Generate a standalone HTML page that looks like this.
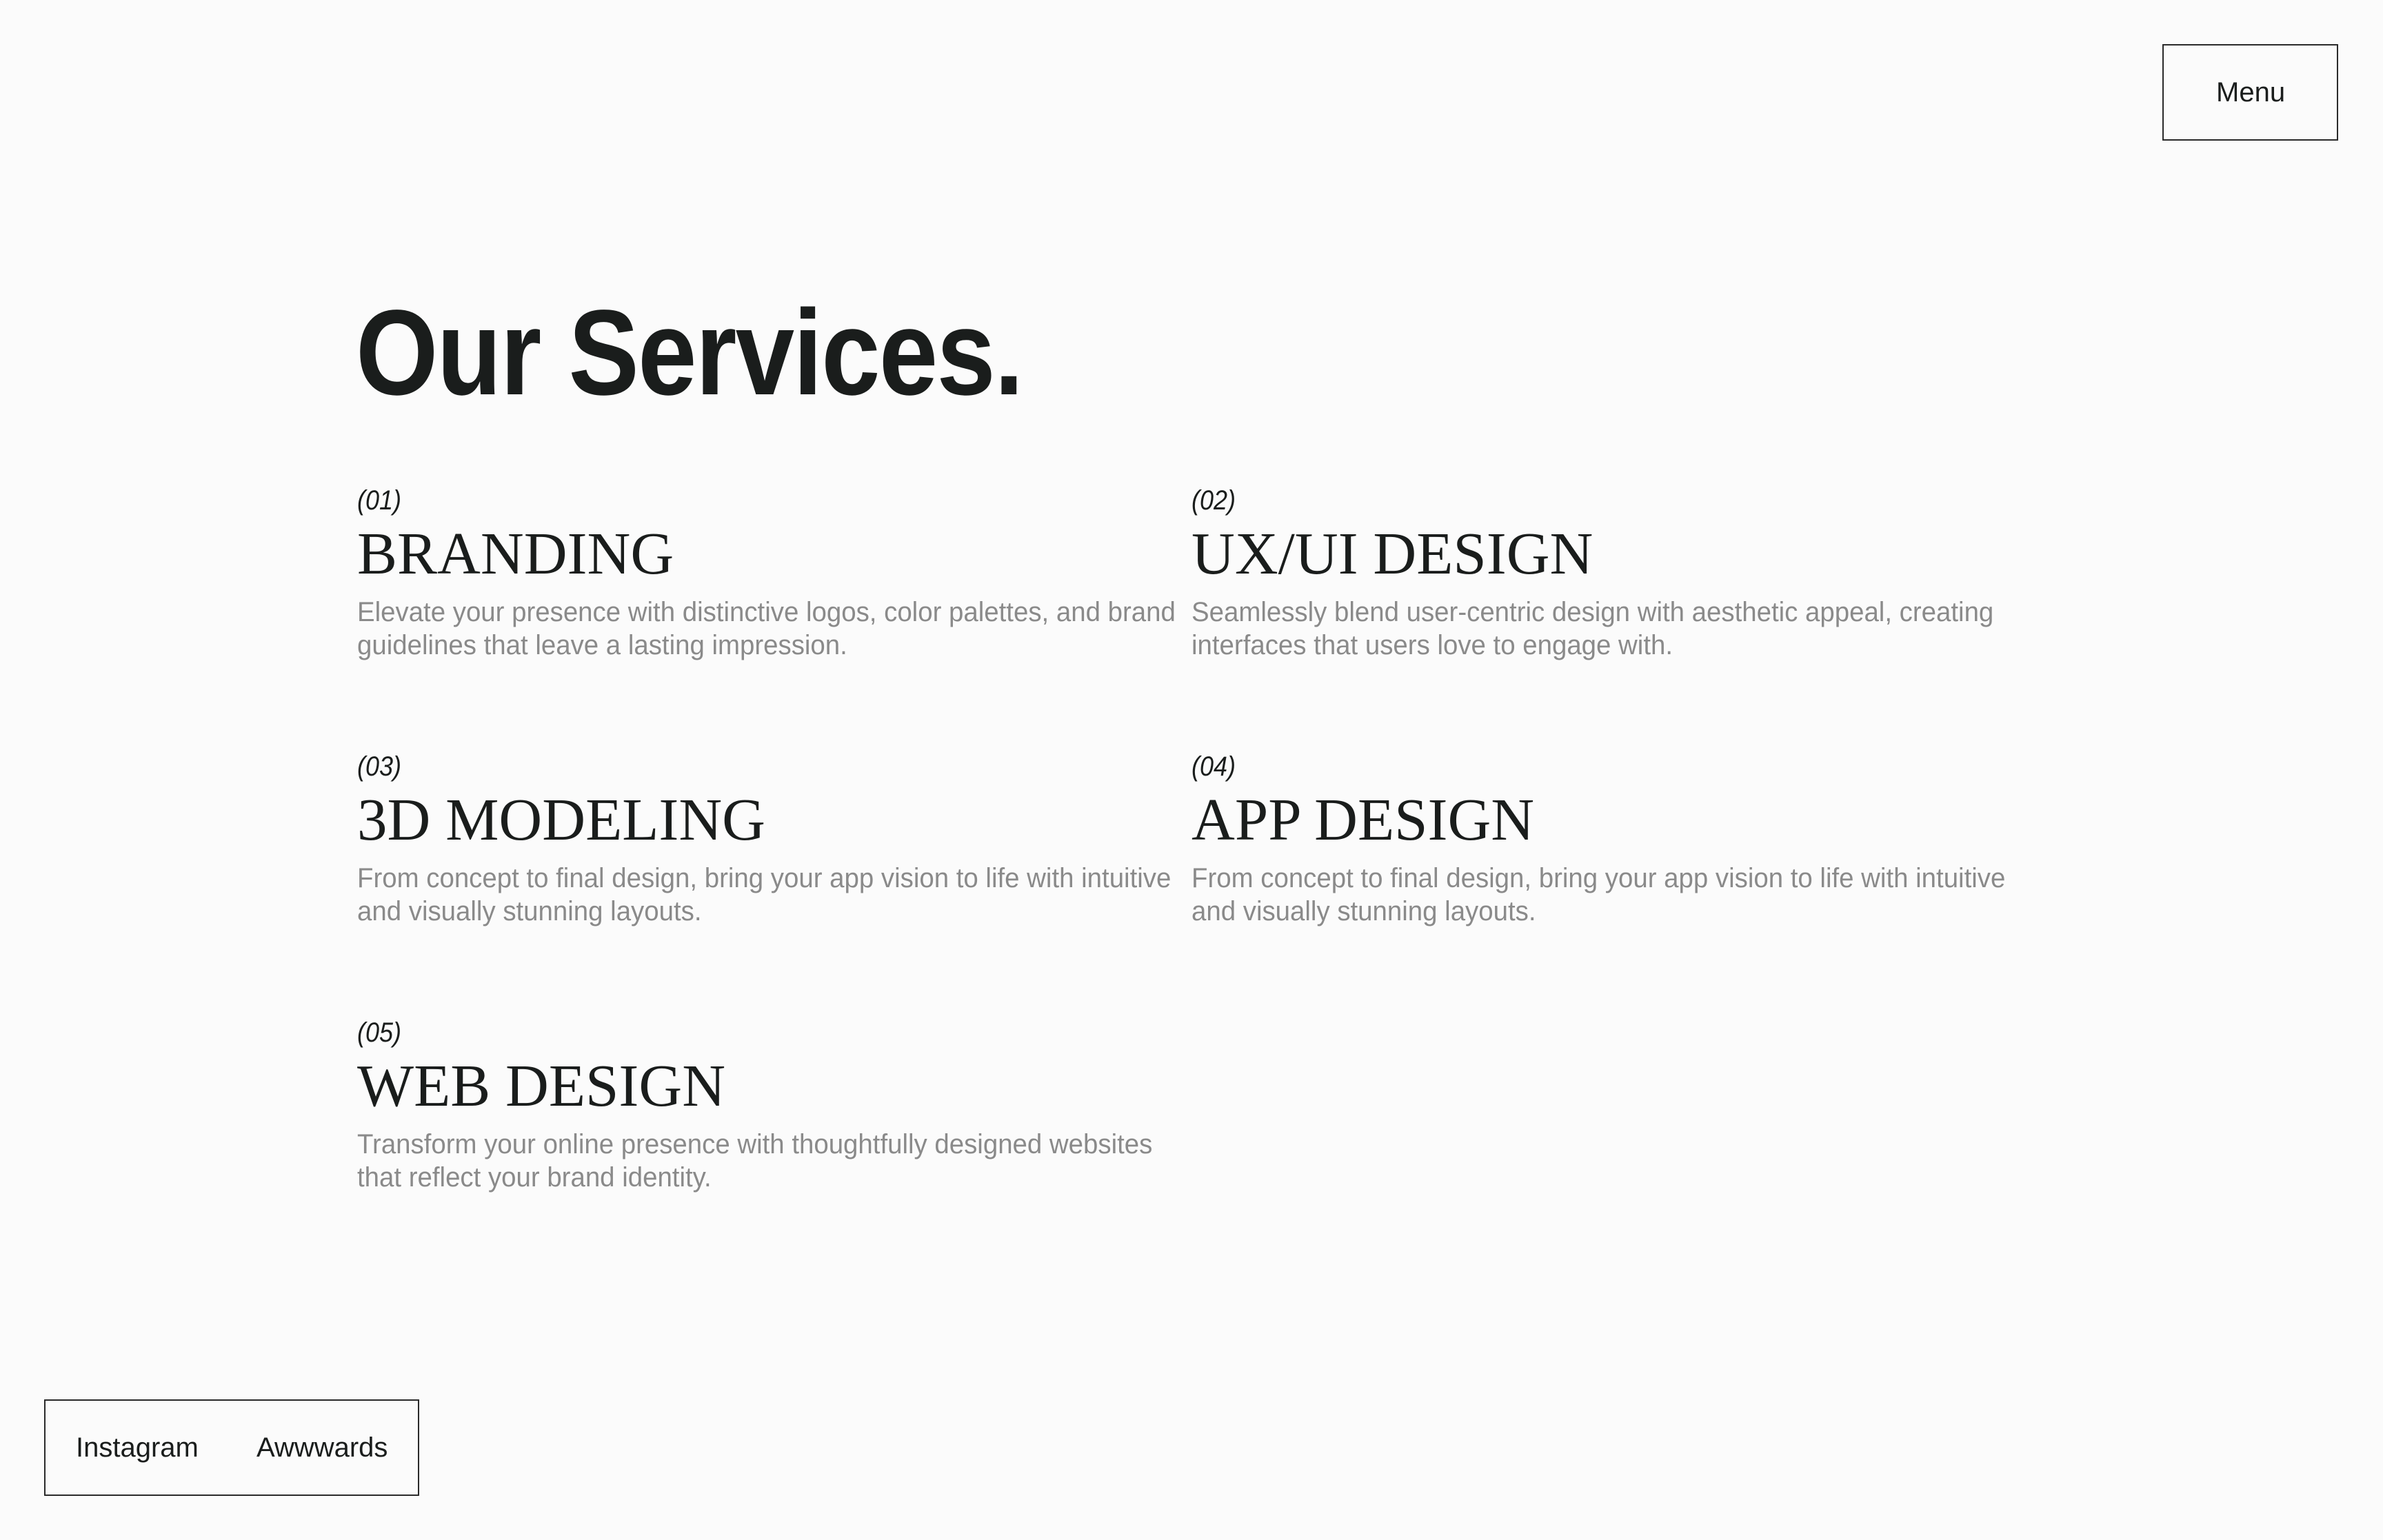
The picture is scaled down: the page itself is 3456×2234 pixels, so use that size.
<!DOCTYPE html>
<html><head><meta charset="utf-8"><style>
html,body{margin:0;padding:0;}
body{width:3456px;height:2234px;background:#fbfbfb;position:relative;overflow:hidden;font-family:"Liberation Sans",sans-serif;color:#1a1d1c;}
.a{position:absolute;white-space:nowrap;line-height:1;transform-origin:0 0;}
.t{font-weight:bold;font-size:176px;transform:scaleX(0.872);left:516px;top:424px;letter-spacing:-2px;}
.n{font-size:40px;font-style:italic;transform:scaleX(0.9);}
.h{font-family:"Liberation Serif",serif;font-size:87px;transform:scaleX(1.0);}
.d{font-size:40px;line-height:48px;color:#8a8a8a;transform:scaleX(0.96);}
.box{position:absolute;border:2px solid #2a2a2a;box-sizing:border-box;}
.bt{position:absolute;font-size:40px;line-height:1;white-space:nowrap;color:#1a1d1c;}
</style></head><body>
<div class="box" style="left:3136px;top:64px;width:255px;height:140px;"></div>
<div class="bt" style="left:3214px;top:114px;">Menu</div>

<div class="a t">Our Services.</div>

<div class="a n" style="left:518px;top:706px;">(01)</div>
<div class="a h" style="left:518px;top:759px;">BRANDING</div>
<div class="a d" style="left:518px;top:864px;">Elevate your presence with distinctive logos, color palettes, and brand<br>guidelines that leave a lasting impression.</div>

<div class="a n" style="left:1728px;top:706px;">(02)</div>
<div class="a h" style="left:1728px;top:759px;">UX/UI DESIGN</div>
<div class="a d" style="left:1728px;top:864px;">Seamlessly blend user-centric design with aesthetic appeal, creating<br>interfaces that users love to engage with.</div>

<div class="a n" style="left:518px;top:1092px;">(03)</div>
<div class="a h" style="left:518px;top:1145px;">3D MODELING</div>
<div class="a d" style="left:518px;top:1250px;">From concept to final design, bring your app vision to life with intuitive<br>and visually stunning layouts.</div>

<div class="a n" style="left:1728px;top:1092px;">(04)</div>
<div class="a h" style="left:1728px;top:1145px;">APP DESIGN</div>
<div class="a d" style="left:1728px;top:1250px;">From concept to final design, bring your app vision to life with intuitive<br>and visually stunning layouts.</div>

<div class="a n" style="left:518px;top:1478px;">(05)</div>
<div class="a h" style="left:518px;top:1531px;">WEB DESIGN</div>
<div class="a d" style="left:518px;top:1636px;">Transform your online presence with thoughtfully designed websites<br>that reflect your brand identity.</div>

<div class="box" style="left:64px;top:2030px;width:544px;height:140px;"></div>
<div class="bt" style="left:110px;top:2080px;">Instagram</div>
<div class="bt" style="left:372px;top:2080px;">Awwwards</div>
</body></html>
